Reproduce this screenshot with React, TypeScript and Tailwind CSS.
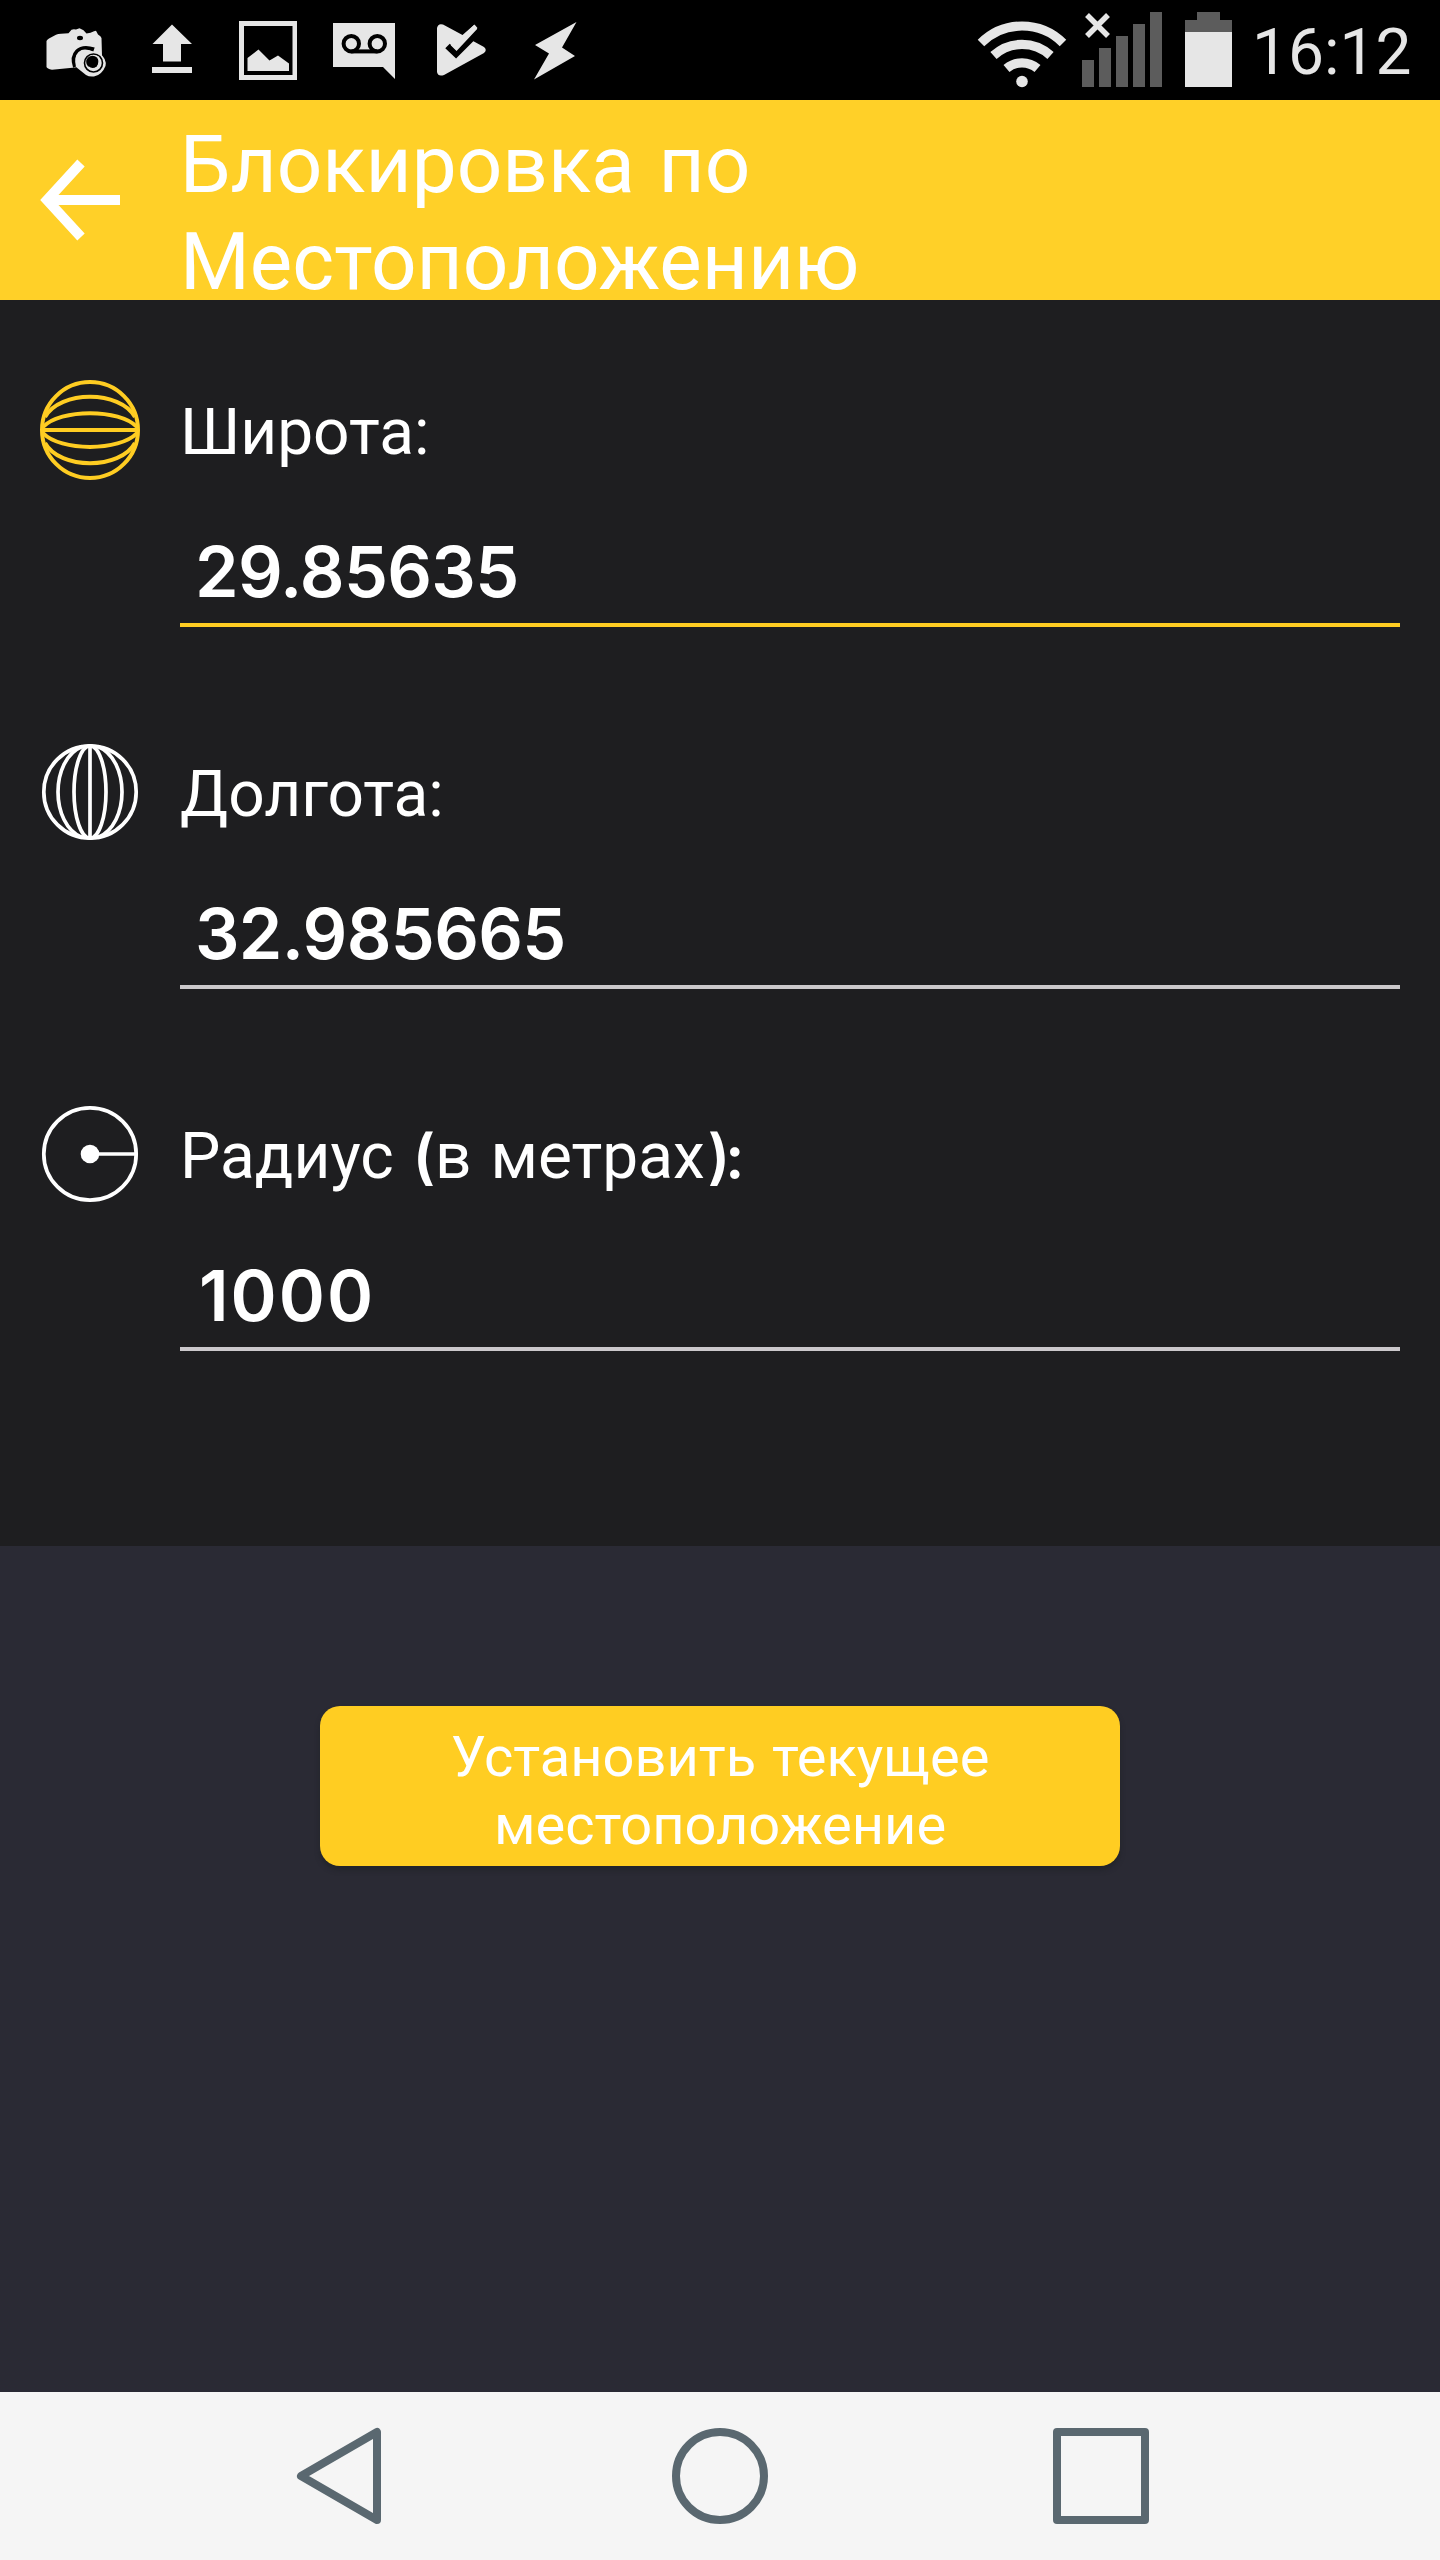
import type { ReactNode } from "react";

function StatusBar() {
  return (
    <div className="flex h-[100px] items-start justify-between bg-black text-[#e6e6e6]">
      <svg width="600" height="100" viewBox="0 0 600 100" fill="#e6e6e6">
        {/* camera */}
        <path d="M46.500 41 Q47 39.500 49 38.500 L56 34.700 Q58 33.700 61 33.700 L68.500 33.300 L71.500 29.800 Q73 29 76 29.500 L79.500 28.300 L83.500 30.300 L86.500 33.500 L90.500 32.700 L94 31.200 L96 30.700 L98 34.500 Q101 36 101.500 38 L102 56 L75 67.500 L52 69.800 Q47 68.500 46.500 67 Z" />
        <ellipse cx="80" cy="38" rx="3" ry="2.200" fill="#000" />
        <path d="M75 67 Q71.500 57 77 51.500 Q83 45.500 94 49.500" fill="none" stroke="#000" strokeWidth="4" />
        <path d="M76 67 Q73.500 57 78.500 52 Q84 47.500 92 51.500 L100 53.500 Q107 59 105.500 66 Q102 75 94 76.500 Q89 77 86 75 Z" />
        <circle cx="93.500" cy="63" r="9" fill="none" stroke="#000" strokeWidth="1.600" />
        <circle cx="92.500" cy="62" r="6.300" fill="#000" />
        <path d="M98 56.500 Q101 63 97 67.500 Q92 70.500 88 67" fill="none" stroke="#e6e6e6" strokeWidth="1.700" />
        {/* upload */}
        <path d="M172 24.500 L192 44 H181 V61.500 H163 V44 H152.500 Z M152 67 H192 V73 H152 Z" />
        {/* picture */}
        <path fillRule="evenodd" d="M239 21 H297 V80 H239 Z M244 26 V75 H292.500 V26 Z" />
        <path d="M247.500 71 V58 L258.500 49.500 L269.500 60.500 L278 55.500 L289 63.500 V71 Z" />
        {/* voicemail */}
        <path d="M333 23 H395 V79 L383 67 H333 Z" />
        <g fill="none" stroke="#000" strokeWidth="4">
          <circle cx="351.300" cy="43.700" r="7.700" />
          <circle cx="377.300" cy="43.700" r="7.700" />
          <path d="M351.300 51.400 H377.300" />
        </g>
        {/* play store check */}
        <path d="M437 28 Q438 23 443 24.500 L462.500 35 L474.500 24.500 L477.500 28 L473 41 L484 47 Q487.500 50 484 53 L444 75 Q438 77 437 72 Z" />
        <path d="M447.500 46 L456 54 L480 30" fill="none" stroke="#000" strokeWidth="6.500" />
        <path d="M452.500 43.500 L456.500 47.500 L475.500 27" fill="none" stroke="#e6e6e6" strokeWidth="5" />
        {/* bolt */}
        <path d="M576.500 22 L562 47.500 L575 56 L534 79.500 L549 53.500 L535 45 Z" />
      </svg>
      <div className="flex">
        <svg width="292" height="100" viewBox="958 0 292 100" fill="#e6e6e6">
          <g fill="none" stroke="#e6e6e6" strokeWidth="9.200">
            <path d="M981 43 A58 58 0 0 1 1063 43" />
            <path d="M993.500 55.500 A42 42 0 0 1 1050.500 55.500" />
            <path d="M1006.500 68.500 A24 24 0 0 1 1037.500 68.500" />
          </g>
          <circle cx="1022" cy="81.500" r="5.800" />
          <path d="M1087 15 L1108 36 M1108 15 L1087 36" stroke="#e6e6e6" strokeWidth="5.500" />
          <path fill="#5c5c5c" d="M1082 60 h12 v27 h-12z M1099 48 h12 v39 h-12z M1116 36 h12 v51 h-12z M1133 24 h12 v63 h-12z M1150 12 h12 v75 h-12z M1197 12 h23 v8 h12 v12 h-47 v-12 h12z" />
          <path d="M1185 32 h47 v55 h-47z" />
        </svg>
        <span className="w-[190px] pt-[15px] pl-[2px] text-[64px] leading-[75px]">16:12</span>
      </div>
    </div>
  );
}

function Header() {
  return (
    <header className="flex h-[200px] bg-[#ffd028] text-white">
      <svg className="mt-[50px] ml-[30px] shrink-0" width="150" height="100" viewBox="30 150 150 100">
        <path d="M81 163 L47 200 L81 237 M48 200 H120" fill="none" stroke="#fff" strokeWidth="10" />
      </svg>
      <h1 className="pt-[17px] text-[80px] leading-[97px] whitespace-nowrap [word-spacing:4px]">
        Блокировка по
        <br />
        Местоположению
      </h1>
    </header>
  );
}

function LatitudeIcon() {
  return (
    <svg width="100" height="100" viewBox="-50 -50 100 100" fill="none" stroke="#ffcd22" strokeWidth="4">
      <circle r="48" />
      <path d="M-48 0 H48" />
      <path d="M-47 -3 C-30 -21.500 30 -21.500 47 -3 M-47 3 C-30 21.500 30 21.500 47 3" />
      <path d="M-45 -13 C-30 -40 30 -40 45 -13 M-45 13 C-30 40 30 40 45 13" />
    </svg>
  );
}

function LongitudeIcon() {
  return (
    <svg width="100" height="100" viewBox="-50 -50 100 100" fill="none" stroke="#fff" strokeWidth="3.700">
      <circle r="46.200" />
      <path d="M0 -46 V46" />
      <ellipse rx="16" ry="46.200" />
      <path d="M-8 -45.500 C-40 -32 -40 32 -8 45.500 M8 -45.500 C40 -32 40 32 8 45.500" />
    </svg>
  );
}

function RadiusIcon() {
  return (
    <svg width="100" height="100" viewBox="-50 -50 100 100" fill="none" stroke="#fff" strokeWidth="3.700">
      <circle r="46.200" />
      <circle r="9.300" fill="#fff" stroke="none" />
      <path d="M0 0 H46" />
    </svg>
  );
}

interface FieldProps {
  icon: ReactNode;
  label: ReactNode;
  value: string;
  line?: string;
  spacing?: string;
}

function Field({ icon, label, value, line = "border-[#cbc8cb]", spacing = "pl-[15px] tracking-[-0.7px]" }: FieldProps) {
  return (
    <div className="flex h-[362px] px-10">
      <div className="w-[140px] shrink-0">{icon}</div>
      <div className="grow">
        <div className="h-[147px] pt-[15px] text-[64px] leading-[75px] whitespace-nowrap [word-spacing:3px]">{label}</div>
        <div className={`h-[100px] border-b-4 pt-[3px] font-['Inter'] text-[70px] leading-[84px] font-semibold ${line} ${spacing}`}>
          {value}
        </div>
      </div>
    </div>
  );
}

export default function App() {
  return (
    <div className="flex h-[2560px] w-[1440px] flex-col overflow-hidden bg-[#2a2a34] font-['Roboto',sans-serif] text-white">
      <StatusBar />
      <Header />
      <main className="h-[1246px] bg-[#1e1e20] pt-20">
        <Field icon={<LatitudeIcon />} label="Широта:" value="29.85635" line="border-[#ffcd22]" />
        <Field icon={<LongitudeIcon />} label="Долгота:" value="32.985665" />
        <Field
          icon={<RadiusIcon />}
          label={
            <>
              Радиус <span className="font-['Inter'] text-[60px] font-semibold">(</span>в метрах
              <span className="ml-[3px] font-['Inter'] text-[60px] font-semibold tracking-[-5px]">):</span>
            </>
          }
          value="1000"
          spacing="pl-[19px] tracking-[2px]"
        />
      </main>
      <div className="flex grow justify-center pt-[160px]">
        <button className="h-[160px] w-[800px] rounded-[20px] bg-[#ffcd22] pt-[10px] text-[56px] leading-[68px] text-white shadow-[0_4px_5px_#22242a] [word-spacing:2px]">
          Установить текущее
          <br />
          местоположение
        </button>
      </div>
      <nav className="flex h-[168px] items-center justify-center bg-[#f5f5f5]">
        <svg width="860" height="100" viewBox="290 2426 860 100" fill="none" stroke="#5a6870" strokeWidth="8" strokeLinejoin="round">
          <path d="M301 2476 L377 2432 V2520 Z" />
          <circle cx="720" cy="2476" r="44" />
          <path d="M1057 2432 H1145 V2520 H1057 Z" />
        </svg>
      </nav>
    </div>
  );
}
